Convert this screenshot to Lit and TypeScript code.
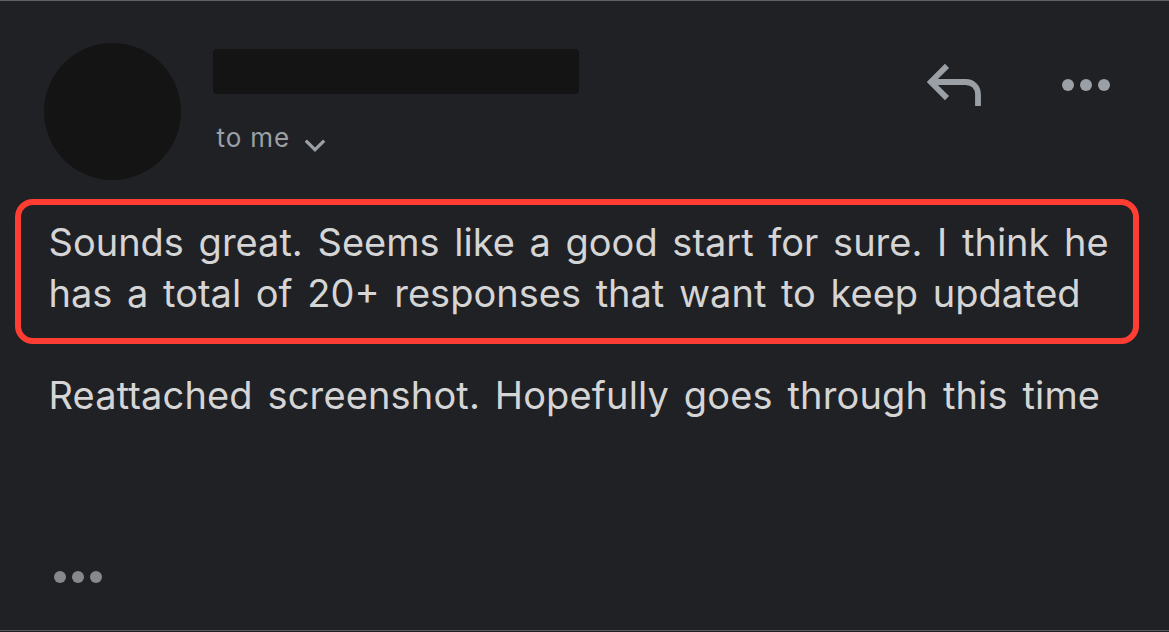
import { LitElement, html, css } from 'lit';
import { customElement, property } from 'lit/decorators.js';

@customElement('more-dots')
export class MoreDots extends LitElement {
  static styles = css`
    :host {
      display: flex;
      gap: 6px;
    }
    .dot {
      width: 12px;
      height: 12px;
      border-radius: 50%;
      background: currentColor;
    }
  `;

  protected render() {
    return html`
      <span class="dot"></span>
      <span class="dot"></span>
      <span class="dot"></span>
    `;
  }
}

@customElement('message-header')
export class MessageHeader extends LitElement {
  @property() recipient = '';

  static styles = css`
    :host {
      display: flex;
      align-items: flex-start;
      height: 157px;
      padding: 41px 59px 0 44px;
      color: #9aa0a6;
    }
    .avatar {
      width: 137px;
      height: 137px;
      margin-top: 1px;
      border-radius: 50%;
      background: #141414;
    }
    .details {
      flex: 1;
      padding: 7px 0 0 32px;
    }
    .sender {
      width: 366px;
      height: 45px;
      border-radius: 4px;
      background: #141414;
    }
    .recipient {
      display: flex;
      align-items: flex-start;
      gap: 14px;
      padding: 28px 0 0 3.5px;
      font-size: 26px;
      line-height: 32px;
      letter-spacing: 0.9px;
      white-space: nowrap;
    }
    .chevron {
      display: block;
      margin-top: 17px;
    }
    .actions {
      display: flex;
      align-items: flex-start;
      gap: 80px;
      padding-top: 21px;
    }
    .reply {
      display: block;
    }
    more-dots {
      margin-top: 16px;
    }
  `;

  protected render() {
    return html`
      <div class="avatar"></div>
      <div class="details">
        <div class="sender"></div>
        <div class="recipient">
          <span>${this.recipient}</span>
          <svg class="chevron" width="22" height="14" viewBox="0 0 22 14">
            <path d="M1.8 1.7 L11 10.7 L20.2 1.7" fill="none" stroke="currentColor" stroke-width="3.2" />
          </svg>
        </div>
      </div>
      <div class="actions">
        <svg class="reply" width="55" height="44" viewBox="0 0 55 44">
          <path
            d="M20 2.9 L3.8 19 L20 35.1 M5 19 H38.5 C46 19 51 24 51 31.5 V43"
            fill="none"
            stroke="currentColor"
            stroke-width="5.8"
          />
        </svg>
        <more-dots></more-dots>
      </div>
    `;
  }
}

@customElement('app-root')
export class AppRoot extends LitElement {
  static styles = css`
    :host {
      display: block;
      font-family: Inter, 'Liberation Sans', sans-serif;
    }
    .message {
      display: flex;
      flex-direction: column;
      box-sizing: border-box;
      height: 632px;
      overflow: hidden;
      border-top: 1px solid #606165;
      background: #202125;
    }
    .highlight {
      box-sizing: border-box;
      height: 145px;
      margin: 0 30px 0 15px;
      padding: 12px 0 0 27.5px;
      border: 6px solid #ff3d33;
      border-radius: 18px;
    }
    .line {
      font-size: 38px;
      line-height: 51px;
      word-spacing: 4px;
      white-space: nowrap;
      color: #d5d5d6;
    }
    .closing {
      padding: 26px 0 0 48.5px;
      letter-spacing: 0.14px;
    }
    .footer {
      display: flex;
      flex: 1;
      align-items: flex-end;
      padding: 0 54px 47px;
      margin-bottom: 1px;
      border-bottom: 1px solid #5b5a60;
      color: #85888c;
    }
  `;

  protected render() {
    return html`
      <div class="message">
        <message-header recipient="to me"></message-header>
        <div class="highlight">
          <div class="line">Sounds great. Seems like a good start for sure. I think he</div>
          <div class="line">has a total of 20+ responses that want to keep updated</div>
        </div>
        <div class="line closing">Reattached screenshot. Hopefully goes through this time</div>
        <div class="footer">
          <more-dots></more-dots>
        </div>
      </div>
    `;
  }
}
